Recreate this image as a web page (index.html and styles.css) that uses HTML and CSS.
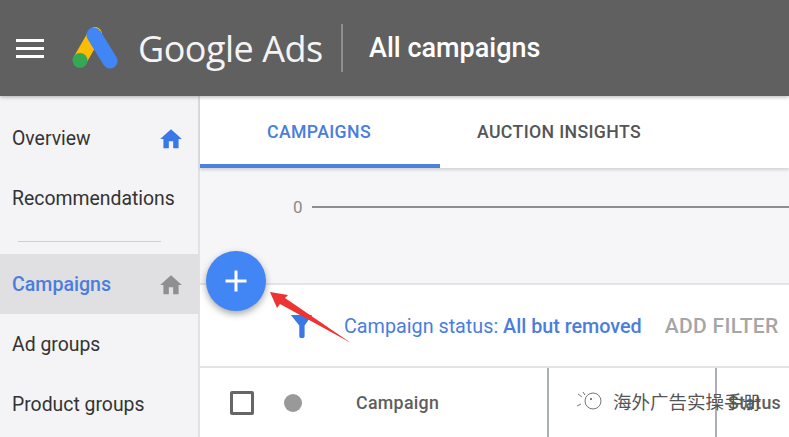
FILE: index.html
```html
<!DOCTYPE html>
<html lang="en">
<head>
<meta charset="utf-8">
<title>Google Ads</title>
<link rel="stylesheet" href="styles.css">
</head>
<body>
<div class="app">
  <header class="topbar">
    <div class="burger"><span></span><span></span><span></span></div>
    <svg class="logo" width="46" height="44" viewBox="0 0 46 44">
      <path d="M23 7 L8 33" stroke="#fbbc04" stroke-width="14" stroke-linecap="round"/>
      <path d="M22 8 L38 34" stroke="#4285f4" stroke-width="15" stroke-linecap="round"/>
      <circle cx="8" cy="33.500" r="7.500" fill="#34a853"/>
    </svg>
    <span class="brand">Google Ads</span>
    <span class="divider"></span>
    <span class="title">All campaigns</span>
  </header>
  <div class="body">
    <nav class="sidebar">
      <div class="nav-item"><span>Overview</span>
        <svg class="home" width="26" height="26" viewBox="0 0 24 24"><path fill="#3b78e7" d="M10 20.500v-6.500h4v6.500h5v-8.500h3L12 3 2 12h3v8.500z"/></svg>
      </div>
      <div class="nav-item"><span>Recommendations</span></div>
      <div class="nav-sep"></div>
      <div class="nav-item active"><span>Campaigns</span>
        <svg class="home" width="26" height="26" viewBox="0 0 24 24"><path fill="#8f8f8f" d="M10 20.500v-6.500h4v6.500h5v-8.500h3L12 3 2 12h3v8.500z"/></svg>
      </div>
      <div class="nav-item"><span>Ad groups</span></div>
      <div class="nav-item"><span>Product groups</span></div>
    </nav>
    <main class="main">
      <div class="tabs">
        <div class="tab selected">CAMPAIGNS</div>
        <div class="tab">AUCTION INSIGHTS</div>
      </div>
      <div class="chart">
        <span class="zero">0</span>
        <span class="axis"></span>
      </div>
      <div class="filter">
        <svg class="funnel" width="23" height="25" viewBox="0 0 26 28" preserveAspectRatio="none"><path fill="#3b78e7" d="M1 1h24L16.500 13v11.500c0 1.500-1 2.500-2.500 2.500h-1c-1.500 0-2.500-1-2.500-2.500V13z"/></svg>
        <span class="status">Campaign status: <b>All but removed</b></span>
        <span class="add">ADD FILTER</span>
      </div>
      <div class="thead">
        <span class="check"></span>
        <span class="dot"></span>
        <span class="col-campaign">Campaign</span>
        <span class="col-mid"></span>
        <span class="col-status">Status</span>
      </div>
    </main>
  </div>
  <button class="fab" aria-label="Add">
    <svg width="24" height="24" viewBox="0 0 24 24"><path fill="#fff" d="M10.500 1.500h3v9h9v3h-9v9h-3v-9h-9v-3h9z"/></svg>
  </button>
  <svg class="arrow" width="90" height="60" viewBox="0 0 90 60"><path fill="#ee3333" d="M0 2 L18 5 L15 8 L81 53 L10 14 L7 18 Z"/></svg>
  <div class="watermark">
    <svg width="28" height="22" viewBox="0 0 28 22"><g fill="none" stroke="#777" stroke-width="1"><circle cx="17" cy="11" r="8"/><path d="M2 4l4 3M1 16l4-2M7 2l2 3"/></g><circle cx="15" cy="9" r="1" fill="#555"/></svg>
    <span>海外广告实操手册</span>
  </div>
</div>
</body>
</html>
```
FILE: styles.css
```css
* { box-sizing: border-box; }
html, body { margin: 0; padding: 0; }
body { width: 789px; height: 437px; overflow: hidden; font-family: Roboto, "Noto Sans CJK SC", sans-serif; background: #fff; }
.app { position: relative; width: 789px; height: 437px; overflow: hidden; display: flex; flex-direction: column; }

.topbar { position: relative; z-index: 2; flex: 0 0 96px; background: #616061; display: flex; align-items: center; color: #fff; box-shadow: 0 1px 4px rgba(0,0,0,.3); }
.burger { width: 28px; margin-left: 16px; display: flex; flex-direction: column; gap: 5px; }
.burger span { display: block; height: 3px; background: #fff; }
.logo { margin-left: 28px; margin-top: 2px; }
.brand { margin-left: 20px; width: 184px; font-family: "Open Sans", sans-serif; font-size: 36px; letter-spacing: -0.5px; white-space: nowrap; color: #f4f4f4; }
.divider { margin-left: 19px; width: 2px; height: 48px; background: #8f8e8f; }
.title { margin-left: 26px; font-size: 27px; font-weight: 500; white-space: nowrap; }

.body { flex: 1; display: flex; min-height: 0; }
.sidebar { flex: 0 0 200px; background: #f4f4f6; border-right: 2px solid #e2e2e4; padding-top: 12px; }
.nav-item { height: 60px; display: flex; align-items: center; justify-content: space-between; padding: 1px 14px 0 12px; font-size: 19.400px; color: #333; }
.nav-sep { height: 1px; margin: 13px 37px 12px 18px; background: #cfcfd1; }
.nav-item.active { background: #e0e0e2; color: #4a7ddd; }
.nav-item.active span { font-weight: 500; font-size: 19.600px; }

.main { flex: 1; display: flex; flex-direction: column; min-width: 0; }
.tabs { flex: 0 0 72px; background: #fff; display: flex; position: relative; box-shadow: 0 2px 3px rgba(0,0,0,.15); z-index: 1; }
.tab { display: flex; align-items: center; justify-content: center; height: 72px; font-size: 17.700px; font-weight: 500; color: #555; letter-spacing: .35px; padding-right: 2px; }
.tab:nth-child(1) { width: 240px; }
.tab:nth-child(2) { width: 240px; }
.tab.selected { color: #4a7ddd; border-bottom: 4px solid #4a82dc; padding-top: 4px; }

.chart { flex: 0 0 115px; background: #f6f6f8; display: flex; align-items: flex-start; padding-top: 30px; }
.zero { margin-left: 93px; font-size: 17px; color: #8a8a8a; line-height: 18px; }
.axis { flex: 1; height: 2px; margin: 8px 0 0 9px; background: #8e8e8e; }

.filter { flex: 0 0 85px; background: #fff; border-top: 2px solid #e4e4e6; border-bottom: 2px solid #e4e4e6; display: flex; align-items: center; padding: 0 0 0 90px; }
.funnel { flex: none; margin-top: 2px; }
.status { margin-left: 31px; margin-top: 2px; font-size: 19.750px; color: #4a7ddd; white-space: nowrap; }
.status b { font-weight: 500; }
.add { margin-left: 23px; margin-top: 1px; font-size: 21px; font-weight: 500; color: #a6a6a6; white-space: nowrap; letter-spacing: .3px; }

.thead { flex: 1; background: #fff; display: flex; align-items: center; position: relative; padding-left: 30px; }
.check { flex: none; width: 24px; height: 24px; border: 3px solid #666; border-radius: 2px; }
.dot { flex: none; width: 18px; height: 18px; margin-left: 30px; border-radius: 50%; background: #999; }
.col-campaign { margin-left: 54px; width: 191px; font-size: 17.800px; font-weight: 500; color: #5e5e5e; letter-spacing: .3px; }
.col-mid { align-self: stretch; width: 170px; border-left: 2px solid #aab0b8; border-right: 2px solid #aab0b8; }
.col-status { margin-left: 11px; font-size: 17.800px; font-weight: 500; color: #5e5e5e; white-space: nowrap; letter-spacing: .3px; }

.fab { position: absolute; left: 206px; top: 251px; width: 60px; height: 60px; border: 0; border-radius: 50%; background: #4285f4; box-shadow: 0 3px 7px rgba(0,0,0,.35); display: flex; align-items: center; justify-content: center; padding: 0; z-index: 3; }
.arrow { position: absolute; left: 270px; top: 290px; z-index: 3; }
.watermark { position: absolute; left: 576px; top: 388px; display: flex; align-items: center; gap: 9px; z-index: 4; font-size: 18.500px; color: #555; white-space: nowrap; }
```
